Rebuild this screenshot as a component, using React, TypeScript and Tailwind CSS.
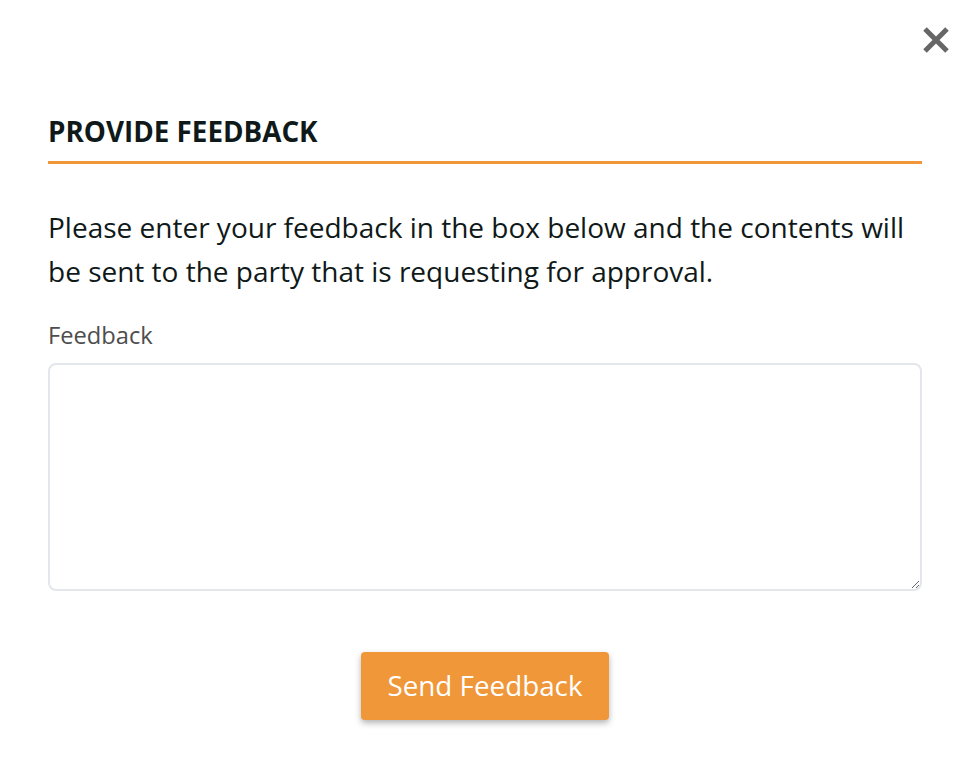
import React from "react";

const App = () => {
  return (
    <div
      className="relative w-[967px] h-[762px] bg-white text-[#0f1919]"
      style={{ fontFamily: '"Open Sans", "Noto Sans", sans-serif' }}
    >
      {/* Close */}
      <button className="absolute right-[17px] top-[26px] w-[28px] h-[28px] text-[#666]">
        <svg viewBox="0 0 28 28" className="w-full h-full">
          <path d="M3 3 L25 25 M25 3 L3 25" stroke="currentColor" strokeWidth="5" />
        </svg>
      </button>

      <div className="px-[48px] pt-[113px] pr-[45px]">
        <h2 className="text-[27.8px] font-bold leading-[36px] pb-[12px] border-b-[3px] border-[#f0973a]">
          PROVIDE FEEDBACK
        </h2>

        <p className="mt-[41px] text-[28px] leading-[44px]">
          Please enter your feedback in the box below and the contents will be sent to the party that is requesting
          for approval.
        </p>

        <label className="block mt-[26px] text-[23.7px] leading-[32px] text-[#4d4d4d]">Feedback</label>
        <textarea className="block mt-[12px] w-full h-[228px] rounded-[8px] border-2 border-[#e3e6ea] outline-none" />

        <div className="flex justify-center mt-[61px]">
          <button className="w-[248px] h-[68px] rounded-[4px] bg-[#f0973a] text-white text-[27.8px] shadow-[0_3px_6px_rgba(0,0,0,0.3)]">
            Send Feedback
          </button>
        </div>
      </div>
    </div>
  );
};

export default App;
